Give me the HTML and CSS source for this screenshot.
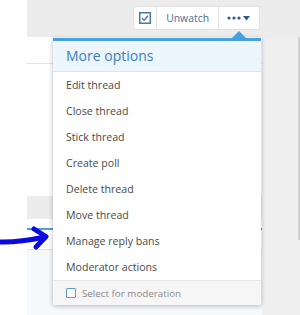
FILE: index.html
```html
<!DOCTYPE html>
<html lang="en">
<head>
    <meta charset="UTF-8">
    <meta name="viewport" content="width=device-width, initial-scale=1.0">
    <title>More options</title>
    <link rel="stylesheet" href="styles.css">
</head>
<body>
    <div class="page">
        <div class="gutter"></div>
        <div class="main">
            <div class="topbar">
                <div class="button-group">
                    <a class="btn btn-icon" href="#">
                        <svg width="12" height="12" viewBox="0 0 12 12">
                            <rect x="0.75" y="0.75" width="10.5" height="10.5" fill="none" stroke="#4a79a8" stroke-width="1.5"/>
                            <path d="M3 6.2 L5.2 8.2 L9 3.8" fill="none" stroke="#4a79a8" stroke-width="1.4"/>
                        </svg>
                    </a>
                    <a class="btn" href="#">Unwatch</a>
                    <a class="btn btn-more" href="#">
                        <svg width="24" height="8" viewBox="0 0 24 8">
                            <circle cx="2" cy="4" r="1.6" fill="#2d5b8a"/>
                            <circle cx="7" cy="4" r="1.6" fill="#2d5b8a"/>
                            <circle cx="12" cy="4" r="1.6" fill="#2d5b8a"/>
                            <path d="M16 2 L23 2 L19.5 6.5 Z" fill="#2d5b8a"/>
                        </svg>
                    </a>
                </div>
            </div>
            <div class="content">
                <div class="thread-area">
                    <div class="row row-first"></div>
                    <div class="row row-body"></div>
                    <div class="row row-gray"></div>
                    <div class="row row-space"></div>
                    <div class="row row-tab"></div>
                    <div class="row row-light"></div>
                </div>
                <div class="sidebar"></div>
            </div>
        </div>
    </div>

    <div class="menu">
        <span class="menu-caret"></span>
        <div class="menu-content">
            <h3 class="menu-header">More options</h3>
            <a class="menu-item" href="#">Edit thread</a>
            <a class="menu-item" href="#">Close thread</a>
            <a class="menu-item" href="#">Stick thread</a>
            <a class="menu-item" href="#">Create poll</a>
            <a class="menu-item" href="#">Delete thread</a>
            <a class="menu-item" href="#">Move thread</a>
            <a class="menu-item" href="#">Manage reply bans</a>
            <a class="menu-item" href="#">Moderator actions</a>
            <div class="menu-footer">
                <span class="checkbox"></span>
                <span>Select for moderation</span>
            </div>
        </div>
    </div>

    <!-- flecha desenhada a mão -->
    <svg class="arrow" width="52" height="30" viewBox="0 0 52 30">
        <path d="M0 18 C 14 18.5, 28 16.5, 45 13" fill="none" stroke="#0a0ae0" stroke-width="5" stroke-linecap="round"/>
        <path d="M34 5 L46 12.5 L36 23" fill="none" stroke="#0a0ae0" stroke-width="5" stroke-linecap="round" stroke-linejoin="round"/>
    </svg>
</body>
</html>
```

FILE: styles.css
```css
body {
    margin: 0;
    font-family: 'Open Sans', 'Noto Sans', sans-serif;
    background: #fff;
    width: 300px;
    height: 315px;
    overflow: hidden;
}
a {
    text-decoration: none;
}
.page {
    display: flex;
    height: 315px;
}
.gutter {
    width: 27px;
    background: #fff;
}
.main {
    flex: 1;
    display: flex;
    flex-direction: column;
}
.topbar {
    height: 37px;
    background: #ececec;
    display: flex;
    justify-content: flex-end;
    padding: 6px 40px 0 0;
    box-sizing: border-box;
}
.button-group {
    display: flex;
    height: 24px;
    background: #fff;
    border: 1px solid #e2e2e2;
    border-radius: 3px;
    box-sizing: border-box;
}
.btn {
    display: flex;
    align-items: center;
    justify-content: center;
    padding: 0 9px;
    font-size: 10.4px;
    color: #4f6f92;
    border-left: 1px solid #e2e2e2;
}
.btn:first-child {
    border-left: none;
}
.btn-icon {
    width: 22px;
    padding: 0;
}
.btn-more {
    width: 40px;
    padding: 0;
}
.content {
    flex: 1;
    display: flex;
}
.thread-area {
    width: 235px;
    display: flex;
    flex-direction: column;
}
.row-first {
    height: 26px;
    border-bottom: 1px solid #e4e4e4;
}
.row-body {
    height: 132px;
}
.row-gray {
    height: 23px;
    background: #ececec;
}
.row-space {
    height: 9px;
    border-bottom: 2px solid #4aa3de;
}
.row-tab {
    height: 19px;
    border-bottom: 1px solid #e4e4e4;
}
.row-light {
    flex: 1;
    background: #f6f9fc;
}
.sidebar {
    flex: 1;
    background: #efefef;
    border-right: 2px solid #d2d2d2;
    margin-bottom: 75px;
    box-shadow: 0 75px 0 #efefef;
}
.menu {
    position: absolute;
    left: 53px;
    top: 38px;
    width: 208px;
}
.menu-caret {
    position: absolute;
    top: -7px;
    left: 179px;
    width: 0;
    height: 0;
    border-left: 7px solid transparent;
    border-right: 7px solid transparent;
    border-bottom: 7px solid #47a0e0;
}
.menu-content {
    background: #fff;
    border-top: 3px solid #47a0e0;
    box-shadow: 0 1px 5px rgba(0, 0, 0, 0.28);
    border-radius: 0 0 3px 3px;
}
.menu-header {
    margin: 0;
    height: 30px;
    line-height: 30px;
    padding: 0 13px;
    font-size: 14px;
    font-weight: normal;
    color: #3c7fbf;
    background: #edf6fd;
    border-bottom: 1px solid #dde3e9;
}
.menu-item {
    display: block;
    height: 26px;
    line-height: 26px;
    padding: 0 13px;
    font-size: 10.6px;
    color: #4a4a4a;
}
.menu-footer {
    display: flex;
    align-items: center;
    gap: 6px;
    height: 24px;
    padding: 0 13px;
    border-top: 1px solid #e6e6e6;
    background: #f6f6f6;
    font-size: 9.8px;
    color: #8a8a8a;
    border-radius: 0 0 3px 3px;
}
.checkbox {
    width: 8px;
    height: 8px;
    border: 1px solid #5b9bd5;
    border-radius: 1px;
    background: #fff;
}
.arrow {
    position: absolute;
    left: 0;
    top: 224px;
}
```
